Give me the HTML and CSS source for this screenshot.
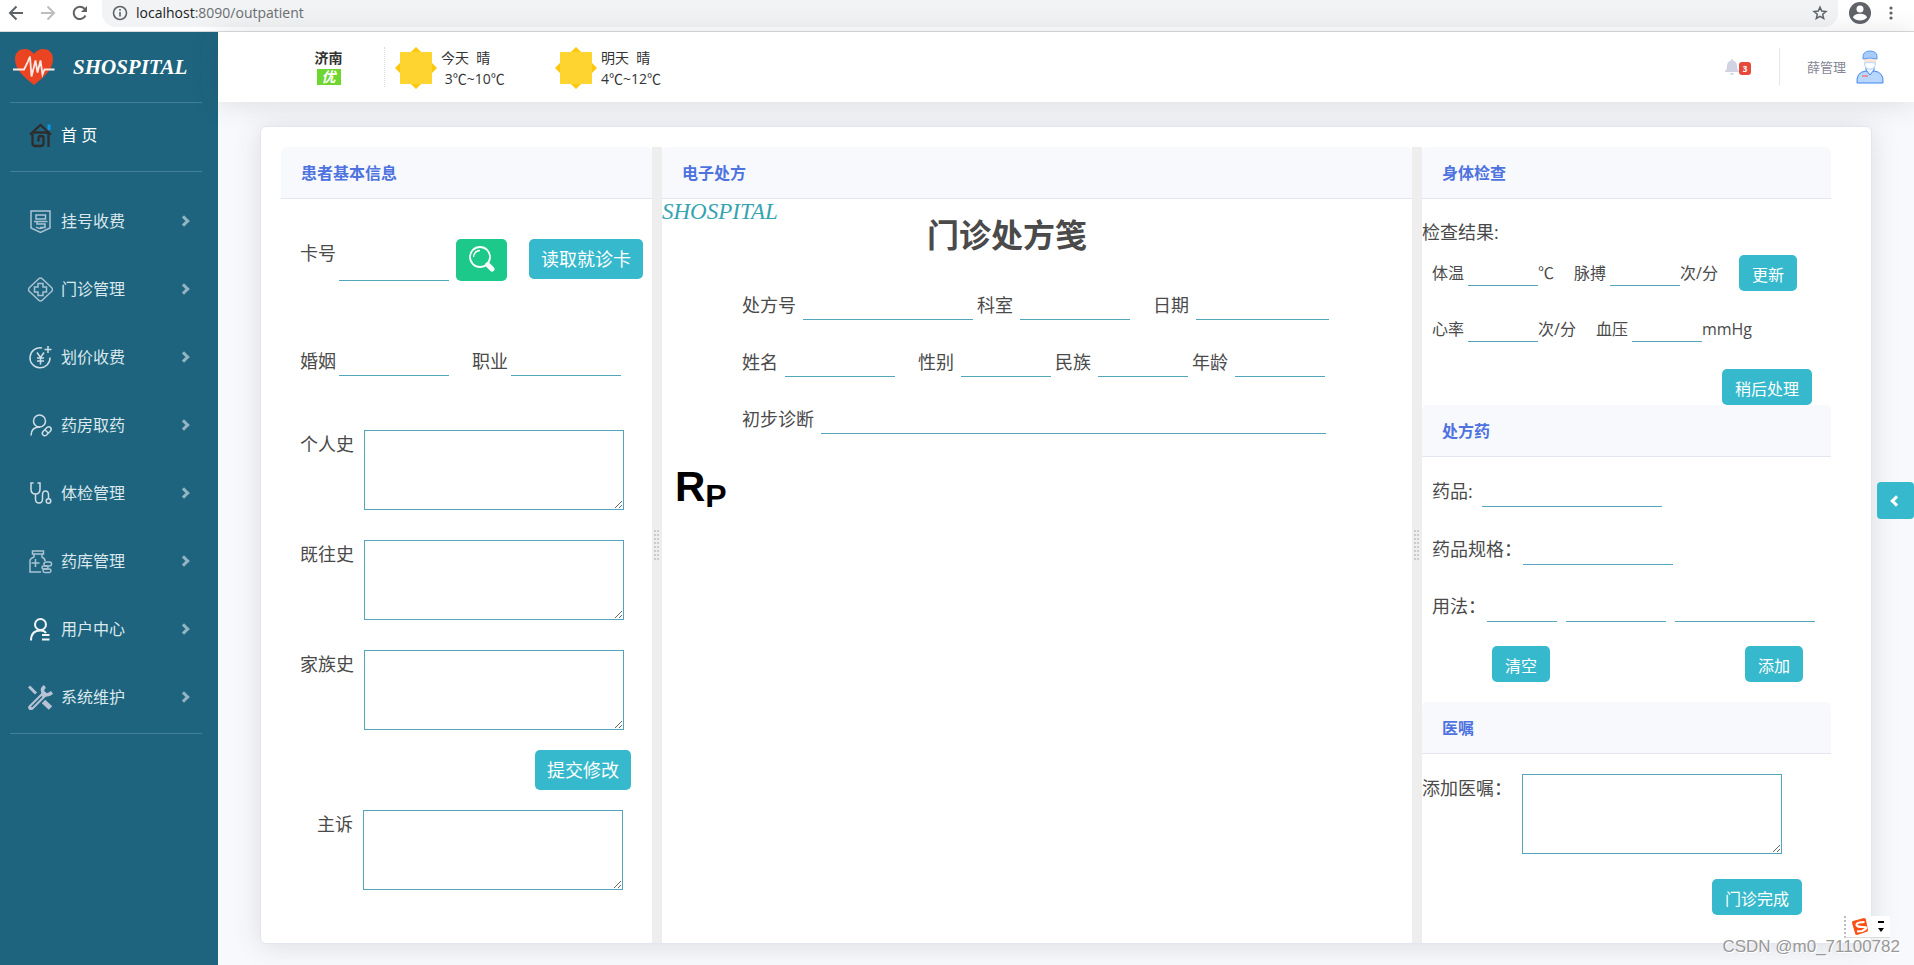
FILE: index.html
```html
<!DOCTYPE html>
<html lang="zh-CN">
<head>
<meta charset="utf-8">
<title>SHOSPITAL</title>
<link rel="stylesheet" href="styles.css">
</head>
<body>
<header class="browser">
  <div class="nav-buttons">
    <button class="plain" aria-label="后退"><svg width="16" height="16" viewBox="0 0 16 16" fill="none" stroke="#5f6368" stroke-width="2"><path d="M15 8H2M8.500 1.500 2 8l6.500 6.500"/></svg></button>
    <button class="plain" aria-label="前进"><svg width="16" height="16" viewBox="0 0 16 16" fill="none" stroke="#bbbdc0" stroke-width="2"><path d="M1 8h13M7.500 1.500 14 8l-6.500 6.500"/></svg></button>
    <button class="plain" aria-label="刷新"><svg width="16" height="16" viewBox="0 0 16 16" fill="none" stroke="#5f6368" stroke-width="2"><path d="M13.500 10.500A6.200 6.200 0 1 1 12.500 3.700L14 5.500"/><path d="M15 1v6H9z" fill="#5f6368" stroke="none"/></svg></button>
  </div>
  <div class="omnibox">
    <svg width="16" height="16" viewBox="0 0 16 16" fill="none" stroke="#5f6368" stroke-width="1.600"><circle cx="8" cy="8" r="6.500"/><path d="M8 7v4.500M8 4v1.700"/></svg>
    <span class="url"><b>localhost</b>:8090/outpatient</span>
    <svg width="16" height="16" viewBox="0 0 16 16" fill="none" stroke="#5f6368" stroke-width="1.500"><path d="m8 2.200 1.700 3.900 4.200.4-3.200 2.800 1 4.200L8 11.300l-3.700 2.200 1-4.200L2.100 6.500l4.200-.4z"/></svg>
  </div>
  <svg width="22" height="22" viewBox="0 0 22 22"><circle cx="11" cy="11" r="11" fill="#5f6368"/><circle cx="11" cy="7" r="3.500" fill="#fff"/><path d="M4 15.500c1-5 13-5 14 0-3 4-11 4-14 0z" fill="#fff"/></svg>
  <svg class="dots" width="4" height="14" viewBox="0 0 4 14" fill="#5f6368"><circle cx="2" cy="2" r="1.600"/><circle cx="2" cy="7" r="1.600"/><circle cx="2" cy="12" r="1.600"/></svg>
</header>

<div class="app">
  <aside class="sidebar">
    <a class="brand" href="#">
      <svg width="42" height="38" viewBox="0 0 42 38"><path d="M21 37C12 30 2 22 2 11 2 4 7 1 11.500 1 16 1 19 3 21 6c2-3 5-5 9.500-5C35 1 40 4 40 11c0 11-10 19-19 26z" fill="#ea4422"/><path d="M0 21.500h11l3-6 3-7 1.500 20 4-16 2 12 3-12 2 14 2-5h10" fill="none" stroke="#fbe9e5" stroke-width="1.800"/></svg>
      <span>SHOSPITAL</span>
    </a>
    <a class="home" href="#">
      <svg width="25" height="25" viewBox="0 0 25 25" fill="none" stroke="#2f2c2e" stroke-width="2.300"><path d="M21 1.500v5.500" stroke="#0a98e8" stroke-width="3"/><path d="M2 11.500 12.500 2 23 11.500M5 9.500h15M4.500 11v9q0 3 3 3h5q3 0 3-3v-5q0-2-2.500-2t-2.500 2v3.500M20.500 10v14"/></svg>
      <span>首 页</span>
    </a>
    <nav class="menu">
      <a href="#"><svg class="ico" viewBox="0 0 25 25"><path d="M3 2h19v17l-9.500 4.500L3 19zM8 6h9.500v4H8zM6 12.500h13.500M9 12.500V15h8v3.500h-5M8 18q4 3 8.500 0"/></svg><span>挂号收费</span><i class="chev"></i></a>
      <a href="#"><svg class="ico" viewBox="0 0 25 25"><path d="M10.500 2q2-2 4 0L23.500 10.500q2 2 0 4L14.500 23q-2 2-4 0L1.500 14.500q-2-2 0-4zM10 6.500h5V10h3.500v5H15v3.500h-5V15H6.500v-5H10z"/></svg><span>门诊管理</span><i class="chev"></i></a>
      <a href="#"><svg class="ico bright" viewBox="0 0 25 25"><path d="M14 3A10 10 0 1 0 22 12.500M20 1v7M16.500 4.500h7M9 7.500l3.500 5 3.500-5M12.500 12.500v7M9 13h7M9 16h7"/></svg><span>划价收费</span><i class="chev"></i></a>
      <a href="#"><svg class="ico bright" viewBox="0 0 25 25"><circle cx="11.500" cy="8" r="6"/><path d="M3 22.500q0-8.500 9-8.500M15 18.500l4-4q2-1.500 3.500 0t0 3.500l-4 4q-2 1.500-3.500 0t0-3.500zM16.700 16.500l3.500 3.500"/></svg><span>药房取药</span><i class="chev"></i></a>
      <a href="#"><svg class="ico bright" viewBox="0 0 25 25"><path d="M5.500 2H3v6q0 5 4.500 5T12 8V2H9.500M7.500 13v5q0 4 3.500 4t3.500-4v-4q0-4 3-4t3 4v3.500"/><circle cx="20.500" cy="20" r="2.300"/></svg><span>体检管理</span><i class="chev"></i></a>
      <a href="#"><svg class="ico" viewBox="0 0 25 25"><path d="M4.500 2h11v3h-11zM6 5v3Q2 9.500 2 12v11h11M14 5v3q3 1.500 3 4M7.500 10v8M3.500 14h8"/><rect x="16" y="13" width="7.500" height="4" rx="2"/><rect x="14" y="17" width="6" height="3" rx="1.500"/><rect x="15" y="20" width="8" height="3.500" rx="1.700"/></svg><span>药库管理</span><i class="chev"></i></a>
      <a href="#"><svg class="ico white" viewBox="0 0 25 25"><circle cx="12.500" cy="7.500" r="5.500"/><path d="M3 23.500Q3 13.500 12.500 13.500q4 0 5.500 2.500M14 18h7.500M14 22.500h7.500"/></svg><span>用户中心</span><i class="chev"></i></a>
      <a href="#"><svg class="ico tools" viewBox="0 0 25 25"><path d="M1 1.500l7 7" stroke-width="3"/><path d="M15.500 16.500l7 6.500" stroke-width="5"/><path d="M3 22.500l13-13" stroke-width="5.500" stroke-linecap="round"/><path d="M3.500 22 14 11.500" stroke="#1e647e" stroke-width="1.500"/><path d="M17 1.500q-4 2.500-1.500 6.500t8.500-.5" stroke-width="3.500"/></svg><span>系统维护</span><i class="chev"></i></a>
    </nav>
  </aside>

  <div class="main">
    <div class="topbar">
      <div class="city"><strong>济南</strong><em>优</em></div>
      <div class="day">
        <svg width="42" height="42" viewBox="0 0 42 42"><path d="M21 0 42 21 21 42 0 21z" fill="#fdc80a"/><path d="M5 5h32v32H5z" fill="#fed530"/></svg>
        <div>今天&nbsp; 晴<br>&nbsp;3℃~10℃</div>
      </div>
      <div class="day">
        <svg width="42" height="42" viewBox="0 0 42 42"><path d="M21 0 42 21 21 42 0 21z" fill="#fdc80a"/><path d="M5 5h32v32H5z" fill="#fed530"/></svg>
        <div>明天&nbsp; 晴<br>4℃~12℃</div>
      </div>
      <button class="plain bell" aria-label="通知">
        <svg width="14" height="16" viewBox="0 0 14 16" fill="#d1d3e2"><path d="M7 0q1 0 1 1.500Q12 2.500 12 7q0 4 2 5v1H0v-1q2-1 2-5 0-4.500 4-5.500Q6 0 7 0zM5 14h4q-.5 2-2 2t-2-2z"/></svg>
        <span class="count">3</span>
      </button>
      <a class="user" href="#">
        <span>薛管理</span>
        <svg width="28" height="34" viewBox="0 0 28 34"><path d="M1 33q-1-11 9-12h8q10 1 9 12z" fill="#b9d6fd" stroke="#3f86f0"/><path d="M10 20l4 5 4-5v-4h-8z" fill="#e8f1fe" stroke="#3f86f0"/><path d="M8 9h12v5q-1 5-6 5t-6-5z" fill="#fbe3d6"/><path d="M8.500 13q5.500-1 11 0 0 6-5.500 6t-5.500-6z" fill="#fff" stroke="#b9d6fd"/><path d="M7 9Q6 1 14 1t7 8q-7-2-14 0z" fill="#a9cbfa" stroke="#5b98f2"/><path d="M6 26h6" stroke="#ee7d83" stroke-width="1.500"/></svg>
      </a>
    </div>

    <main class="card">
      <section class="panel">
        <h2>患者基本信息</h2>
        <div class="patient">
          <div class="row search">
            <label for="card">卡号</label><input id="card" class="line w110">
            <button class="btn find" aria-label="查询"><svg width="26" height="26" viewBox="0 0 26 26" fill="none" stroke="#fff"><circle cx="11" cy="11" r="10" stroke-width="1.800"/><path d="M4.500 11Q5 5 11 4.500" stroke-width="1.300"/><path d="M17 17l2 2" stroke-width="3"/><path d="M19.500 19.500l3.500 3.500" stroke-width="5" stroke-linecap="round"/></svg></button>
            <button class="btn large">读取就诊卡</button>
          </div>
          <div class="row marriage">
            <label for="marry">婚姻</label><input id="marry" class="line w110">
            <label class="second" for="job">职业</label><input id="job" class="line w110">
          </div>
          <div class="history"><label for="h1">个人史</label><textarea id="h1"></textarea></div>
          <div class="history"><label for="h2">既往史</label><textarea id="h2"></textarea></div>
          <div class="history"><label for="h3">家族史</label><textarea id="h3"></textarea></div>
          <button class="btn large submit">提交修改</button>
          <div class="history complaint"><label for="h4">主诉</label><textarea id="h4"></textarea></div>
        </div>
      </section>
      <div class="splitter"><i></i></div>
      <section class="panel">
        <h2>电子处方</h2>
        <div class="sheet-brand">SHOSPITAL</div>
        <h1>门诊处方笺</h1>
        <div class="sheet">
          <div class="row">
            <label for="rx">处方号</label><input id="rx" class="line w170">
            <label class="close" for="dept">科室</label><input id="dept" class="line w110">
            <label class="far" for="date">日期</label><input id="date" class="line w133">
          </div>
          <div class="row">
            <label for="name">姓名</label><input id="name" class="line w110">
            <label class="far" for="sex">性别</label><input id="sex" class="line w90">
            <label class="close" for="nation">民族</label><input id="nation" class="line w90">
            <label class="close" for="age">年龄</label><input id="age" class="line w90">
          </div>
          <div class="row">
            <label for="diag">初步诊断</label><input id="diag" class="line w505">
          </div>
        </div>
        <div class="rp">R<sub>P</sub></div>
      </section>
      <div class="splitter"><i></i></div>
      <section class="panel">
        <h2>身体检查</h2>
        <div class="exam">
          <p>检查结果:</p>
          <div class="row vitals">
            <label for="temp">体温</label><input id="temp" class="line w70"><span>℃</span>
            <label class="next" for="pulse">脉搏</label><input id="pulse" class="line w70"><span>次/分</span>
            <button class="btn update">更新</button>
          </div>
          <div class="row vitals">
            <label for="heart">心率</label><input id="heart" class="line w70"><span>次/分</span>
            <label class="next" for="bp">血压</label><input id="bp" class="line w70"><span>mmHg</span>
          </div>
          <button class="btn later">稍后处理</button>
        </div>
        <h2>处方药</h2>
        <div class="drugs">
          <div class="row"><label for="drug">药品:</label><input id="drug" class="line w180"></div>
          <div class="row wide-colon"><label for="spec">药品规格：</label><input id="spec" class="line w150"></div>
          <div class="row wide-colon"><label for="use">用法：</label><input id="use" class="line w70"><input class="line w100" aria-label="频次"><input class="line w140" aria-label="说明"></div>
          <div class="actions"><button class="btn">清空</button><button class="btn">添加</button></div>
        </div>
        <h2>医嘱</h2>
        <div class="advice"><label for="adv">添加医嘱：</label><textarea id="adv"></textarea></div>
        <button class="btn done">门诊完成</button>
      </section>
    </main>
  </div>
</div>

<button class="drawer" aria-label="展开"><i class="chev left"></i></button>
<div class="ime">
  <svg width="16" height="17" viewBox="0 0 16 17"><path d="M1 3 12 0q2 0 2 2l2 10q0 2-2 2L5 17q-2 0-2-2L0 5q0-2 1-2z" fill="#fa5015"/><path d="M12.500 4Q5 4 4.500 6.500T11 9t-1 4l-5 .5" fill="none" stroke="#fff" stroke-width="2.200"/></svg>
  <svg width="6" height="11" viewBox="0 0 6 11"><path d="M0 0h6v2H0zM0 7h6L3 11z"/></svg>
</div>
<div class="watermark">CSDN @m0_71100782</div>
</body>
</html>
```

FILE: styles.css
```css
* { box-sizing: border-box; }
body {
  margin: 0;
  min-height: 100vh;
  display: flex;
  flex-direction: column;
  position: relative;
  font-family: "Open Sans", "Noto Sans CJK SC", sans-serif;
  font-size: 16px;
  line-height: 24px;
  color: #4a4a4a;
  background: #f8f9fc;
}
a { color: inherit; text-decoration: none; }
button, input, textarea { font: inherit; }
svg { display: block; flex: none; }
.plain { border: 0; background: none; padding: 0; }

/* browser toolbar */
.browser {
  height: 32px;
  display: flex;
  align-items: center;
  padding: 0 21px 6px 8px;
  background: #fff;
  border-bottom: 1px solid #d8dadc;
}
.nav-buttons { display: flex; gap: 16px; width: 94px; }
.omnibox {
  flex: 1;
  height: 28px;
  display: flex;
  align-items: center;
  gap: 8px;
  padding: 0 10px;
  margin-right: 11px;
  border-radius: 0 0 14px 14px;
  background: #f1f3f4;
}
.url { flex: 1; font-size: 14px; color: #6b6e72; }
.url b { font-weight: 400; color: #202124; }
.dots { margin-left: 18px; }

/* sidebar */
.app { flex: 1; display: flex; }
.sidebar { width: 218px; flex: none; background: #1e647e; color: #fff; padding: 0 16px 0 10px; }
.brand {
  height: 71px;
  display: flex;
  align-items: center;
  gap: 18px;
  padding: 0 0 0 3px;
  border-bottom: 1px solid #437f98;
  font: italic bold 21px "Liberation Serif", serif;
}
.home {
  height: 69px;
  display: flex;
  align-items: center;
  gap: 8px;
  padding: 0 18px 4px;
  border-bottom: 1px solid #437f98;
}
.menu { padding: 15px 0 2px; border-bottom: 1px solid #437f98; color: #dbe8ed; }
.menu a { height: 68px; display: flex; align-items: center; gap: 8px; padding: 0 14px 0 18px; }
.ico { width: 25px; height: 25px; fill: none; stroke: #a9c3d2; stroke-width: 1.500px; }
.ico.bright { stroke: #cfdee6; }
.ico.white { stroke: #f0f5f7; stroke-width: 2px; }
.ico.tools { stroke: #b9c2d4; }
.chev {
  box-sizing: content-box;
  width: 5px;
  height: 5px;
  margin-left: auto;
  border: solid #94b4c2;
  border-width: 3px 3px 0 0;
  transform: rotate(45deg);
}
.chev.left { display: block; border-color: #fff; margin: 0; transform: rotate(225deg); }

/* top bar */
.main { flex: 1; min-width: 0; display: flex; flex-direction: column; }
.topbar {
  height: 70px;
  display: flex;
  align-items: center;
  padding: 0 30px 0 67px;
  background: #fff;
  box-shadow: 0 2px 28px rgba(58, 59, 69, .15);
  font-size: 14px;
  line-height: 21px;
  color: #333;
}
.city {
  flex: none;
  width: 100px;
  height: 40px;
  display: flex;
  flex-direction: column;
  align-items: center;
  padding-right: 12px;
  margin-right: 10px;
  border-right: 1px dotted #ddd;
}
.city em { width: 24px; height: 16px; line-height: 16px; margin-top: 1px; text-align: center; font-weight: bold; color: #fff; background: #6fd52f; }
.day { width: 160px; display: flex; align-items: center; gap: 4px; padding-top: 2px; }
.bell { margin-left: auto; display: flex; align-items: center; height: 38px; padding-right: 28px; border-right: 1px solid #e3e6f0; }
.count { width: 12px; height: 13px; margin-top: 3px; border-radius: 3px; background: #e74a3b; color: #fff; font-size: 8px; font-weight: bold; line-height: 13px; }
.user { display: flex; align-items: center; gap: 10px; margin-left: 27px; font-size: 13px; color: #858796; }

/* card and panels */
.card {
  flex: 1;
  display: grid;
  grid-template-columns: 371fr 10px 750fr 10px 409fr;
  margin: 24px 42px 21px;
  padding: 20px 40px 0 20px;
  background: #fff;
  border: 1px solid #e3e6f0;
  border-radius: 6px;
  box-shadow: 0 2px 28px rgba(58, 59, 69, .15);
}
.panel { min-width: 0; }
h2 {
  margin: 0;
  padding: 14px 20px 13px;
  font-size: 16px;
  line-height: 24px;
  font-weight: 700;
  color: #4e73df;
  background: #f8f9fc;
  border-bottom: 1px solid #e3e6f0;
  border-radius: 5px 5px 0 0;
}
.splitter { display: flex; align-items: center; padding-left: 2px; background: #eee; }
.splitter i {
  width: 5px;
  height: 30px;
  background:
    repeating-linear-gradient(to bottom, transparent 0 2px, #eee 2px 4px),
    repeating-linear-gradient(to right, #ccc 0 2px, #eee 2px 3px);
}
.row { display: flex; align-items: center; font-size: 18px; }
.row label, .row span { white-space: nowrap; }
.line { border: 0; border-bottom: 1px solid #53a6b9; background: none; padding: 0; height: 30px; outline: 0; flex: none; }
.w70 { width: 70px; }
.w90 { width: 90px; }
.w100 { width: 100px; }
.w110 { width: 110px; }
.w133 { width: 133px; }
.w140 { width: 140px; }
.w150 { width: 150px; }
.w170 { width: 170px; }
.w180 { width: 180px; }
.w505 { width: 505px; }
textarea { display: block; width: 260px; height: 80px; border: 1px solid #53a6b9; background: #fff; flex: none; }
.btn {
  display: block;
  border: 0;
  border-radius: 5px;
  padding: 8px 13px 4px;
  background: #36b9cc;
  color: #fff;
  white-space: nowrap;
}
.btn.large { font-size: 18px; padding: 8px 12px; }

/* patient panel */
.patient { padding: 40px 0 0 19px; }
.search { align-items: flex-start; height: 107px; }
.search label { line-height: 28px; }
.search .line { height: 42px; margin-left: 3px; }
.search .find { height: 42px; padding: 0 12px 2px 13px; margin: 0 22px 0 7px; background: #1cc88a; }
.marriage { margin-bottom: 54px; }
.marriage .line { margin-left: 3px; }
.marriage .second { margin-left: 23px; }
.history { display: flex; gap: 10px; margin-bottom: 30px; font-size: 18px; line-height: 28px; }
.submit { margin: -10px 0 20px 235px; }
.complaint { padding-left: 17px; }

/* prescription panel */
.sheet-brand { font: italic 23px "Liberation Serif", serif; line-height: 26px; color: #36a3b3; }
h1 { margin: -10px 0 0; padding-right: 60px; text-align: center; font-size: 32px; line-height: 40px; }
.sheet { display: flex; flex-direction: column; gap: 27px; padding: 35px 0 0 80px; }
.sheet .line { margin-left: 7px; }
.sheet .close { margin-left: 4px; }
.sheet .far { margin-left: 23px; }
.rp { display: flex; align-items: flex-end; padding: 29px 0 0 13px; font: bold 42px "Liberation Sans", sans-serif; color: #000; }
.rp sub { font-size: 32px; line-height: 30px; }

/* examination panel */
.exam { padding: 20px 0 0; }
.exam p { margin: 0; font-size: 18px; line-height: 26px; }
.vitals { height: 56px; padding-left: 10px; font-size: 16px; }
.vitals .line { height: 26px; margin-left: 4px; }
.vitals .next { margin-left: 20px; }
.update { margin-left: 21px; }
.later { margin: 12px 19px 0 auto; }
.drugs { padding: 5px 0 20px 10px; }
.drugs .row { height: 58px; }
.drugs .row + .row { height: 57px; }
.drugs .line { margin-left: 9px; height: 32px; }
.drugs .wide-colon label { margin-right: -8px; }
.actions { display: flex; justify-content: space-between; padding: 12px 28px 0 60px; }
.advice { display: flex; justify-content: space-between; padding: 20px 49px 25px 0; font-size: 18px; line-height: 28px; }
.done { margin: 0 29px 0 auto; }

/* overlays */
.drawer {
  position: absolute;
  right: 0;
  top: 482px;
  width: 37px;
  height: 37px;
  display: grid;
  place-items: center;
  padding: 0;
  border: 0;
  border-radius: 4px;
  background: #36b9cc;
}
.ime {
  position: absolute;
  right: 24px;
  bottom: 27px;
  width: 46px;
  height: 22px;
  display: flex;
  align-items: center;
  justify-content: space-between;
  padding: 0 6px 0 6px;
  background: #fff;
  border-left: 2px dotted #bbb;
  border-bottom: 1px solid #ddd;
}
.watermark {
  position: absolute;
  right: 14px;
  bottom: 6px;
  font: 17px/24px "Liberation Sans", sans-serif;
  color: #999;
  text-shadow: 1px 1px #fff;
}
```
